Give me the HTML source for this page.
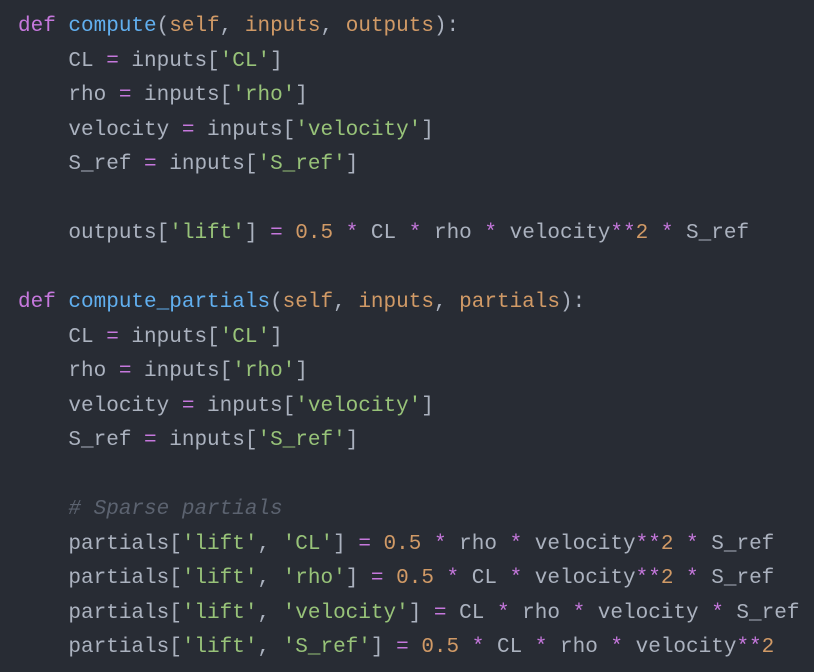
<!DOCTYPE html>
<html><head><style>
html,body{margin:0;padding:0;background:#282c34;width:814px;height:672px;overflow:hidden}
pre{margin:0;position:absolute;left:18px;top:10px;font-family:"Liberation Mono",monospace;font-size:21px;line-height:34.5px;color:#abb2bf;white-space:pre}
.k{color:#c678dd}.f{color:#61afef}.p{color:#d19a66}.s{color:#98c379}.c{color:#5c6370;font-style:italic}.o{color:#c678dd}.n{color:#d19a66}
</style></head><body>
<pre><span class="k">def</span> <span class="f">compute</span>(<span class="p">self</span>, <span class="p">inputs</span>, <span class="p">outputs</span>):
    CL <span class="o">=</span> inputs[<span class="s">'CL'</span>]
    rho <span class="o">=</span> inputs[<span class="s">'rho'</span>]
    velocity <span class="o">=</span> inputs[<span class="s">'velocity'</span>]
    S_ref <span class="o">=</span> inputs[<span class="s">'S_ref'</span>]

    outputs[<span class="s">'lift'</span>] <span class="o">=</span> <span class="n">0.5</span> <span class="o">*</span> CL <span class="o">*</span> rho <span class="o">*</span> velocity<span class="o">**</span><span class="n">2</span> <span class="o">*</span> S_ref

<span class="k">def</span> <span class="f">compute_partials</span>(<span class="p">self</span>, <span class="p">inputs</span>, <span class="p">partials</span>):
    CL <span class="o">=</span> inputs[<span class="s">'CL'</span>]
    rho <span class="o">=</span> inputs[<span class="s">'rho'</span>]
    velocity <span class="o">=</span> inputs[<span class="s">'velocity'</span>]
    S_ref <span class="o">=</span> inputs[<span class="s">'S_ref'</span>]

    <span class="c"># Sparse partials</span>
    partials[<span class="s">'lift'</span>, <span class="s">'CL'</span>] <span class="o">=</span> <span class="n">0.5</span> <span class="o">*</span> rho <span class="o">*</span> velocity<span class="o">**</span><span class="n">2</span> <span class="o">*</span> S_ref
    partials[<span class="s">'lift'</span>, <span class="s">'rho'</span>] <span class="o">=</span> <span class="n">0.5</span> <span class="o">*</span> CL <span class="o">*</span> velocity<span class="o">**</span><span class="n">2</span> <span class="o">*</span> S_ref
    partials[<span class="s">'lift'</span>, <span class="s">'velocity'</span>] <span class="o">=</span> CL <span class="o">*</span> rho <span class="o">*</span> velocity <span class="o">*</span> S_ref
    partials[<span class="s">'lift'</span>, <span class="s">'S_ref'</span>] <span class="o">=</span> <span class="n">0.5</span> <span class="o">*</span> CL <span class="o">*</span> rho <span class="o">*</span> velocity<span class="o">**</span><span class="n">2</span></pre>
</body></html>
